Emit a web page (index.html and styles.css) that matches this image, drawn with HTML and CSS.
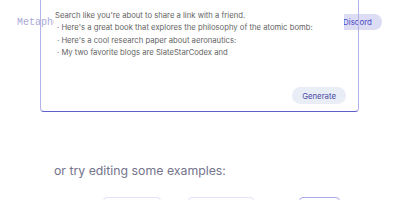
FILE: index.html
```html
<!DOCTYPE html>
<html>
<head>
<meta charset="utf-8">
<link rel="stylesheet" href="styles.css">
</head>
<body>
<div class="page">
  <header class="header">
    <div class="logo"><span class="logo-clip">Metaphor</span></div>
    <a class="discord">Discord</a>
  </header>
  <div class="searchbox">
    <div class="sheet">
      <div class="prompt">
        <div class="lead">Search like you're about to share a link with a friend.</div>
        <div class="bullet">· Here's a great book that explores the philosophy of the atomic bomb:</div>
        <div class="bullet">· Here's a cool research paper about aeronautics:</div>
        <div class="bullet">· My two favorite blogs are SlateStarCodex and</div>
      </div>
    </div>
    <div class="actions">
      <button class="generate">Generate</button>
    </div>
  </div>
  <main class="examples">
    <h2 class="examples-title">or try editing some examples:</h2>
    <div class="cards">
      <div class="card c1"></div>
      <div class="card c2"></div>
      <div class="card c3"></div>
    </div>
  </main>
</div>
</body>
</html>
```
FILE: styles.css
```css
html, body {
  margin: 0;
  padding: 0;
  background: #ffffff;
  overflow: hidden;
}
.page {
  position: relative;
  width: 400px;
  height: 200px;
  overflow: hidden;
  font-family: Inter, "Noto Sans", sans-serif;
}
.header {
  display: flex;
  justify-content: space-between;
  align-items: center;
  height: 44px;
  padding: 0 18px 0 17px;
  box-sizing: border-box;
}
.logo {
  font-family: "Liberation Mono", "DejaVu Sans Mono", monospace;
  font-size: 10px;
  color: #a9a9d6;
  line-height: 12px;
  padding-top: 2px;
}
.logo-clip {
  display: inline-block;
  width: 37px;
  overflow: hidden;
  white-space: nowrap;
  vertical-align: top;
}
.discord {
  display: flex;
  align-items: center;
  height: 16px;
  margin-top: -1px;
  padding: 0 10px 0 24px;
  border-radius: 8px;
  background: #dcdcf5;
  color: #4c4cc4;
  font-size: 8px;
}
.searchbox {
  position: absolute;
  left: 40px;
  top: -40px;
  width: 319px;
  height: 152px;
  box-sizing: border-box;
  border: 1.5px solid #b3b3ea;
  border-bottom-color: #5f5fc9;
  border-radius: 4px;
  display: flex;
  flex-direction: column;
  justify-content: space-between;
}
.sheet {
  margin: 0 14px 0 13px;
  background: #ffffff;
  padding-top: 49px;
}
.prompt {
  font-size: 7.7px;
  line-height: 12.3px;
  color: #646464;
  white-space: nowrap;
  margin-left: 1px;
}
.bullet {
  padding-left: 2px;
}
.actions {
  display: flex;
  justify-content: flex-end;
  padding: 0 12px 7px 0;
}
.generate {
  height: 17px;
  padding: 0 10px;
  border: none;
  border-radius: 9px;
  background: #e9edf5;
  color: #4a4aa6;
  font-family: Inter, "Noto Sans", sans-serif;
  font-size: 7.8px;
}
.examples {
  padding: 119px 0 0 54px;
}
.examples-title {
  margin: 0;
  font-weight: 400;
  font-size: 12.3px;
  line-height: 16px;
  color: #74748c;
}
.cards {
  display: flex;
  margin-top: 18px;
  padding-left: 49px;
  gap: 27px;
}
.card {
  height: 20px;
  border: 1px solid #e2e2f8;
  border-radius: 4px;
  box-sizing: border-box;
}
.c1 { width: 58px; }
.c2 { width: 66px; }
.c3 { width: 41px; margin-left: 18px; border: 1.5px solid #a9a9ef; }
```
